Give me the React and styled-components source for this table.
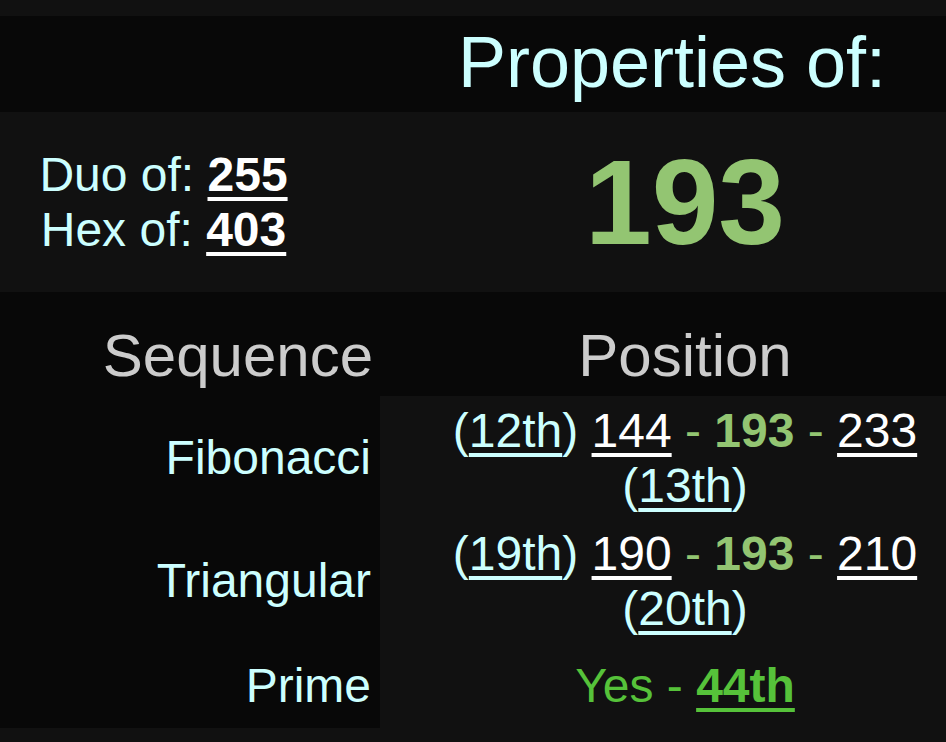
import React from 'react';
import styled, {createGlobalStyle} from 'styled-components';

const GlobalStyle = createGlobalStyle`
  body {
    margin: 0;
    background: #111;
    font-family: "Liberation Sans", Arial, Helvetica, sans-serif;
    color: #ccffff;
  }
`;

const Page = styled.div`
  padding-top: 16px;
  width: 946px;
`;

const IntroTable = styled.div`
  display: grid;
  grid-template-columns: 380px 1fr;
  grid-template-rows: 96px 180px;
`;

const HeadBlank = styled.div`
  background: #080808;
`;

const Title = styled.div`
  background: #080808;
  font-size: 72px;
  text-align: center;
  padding: 5px 0 0 18px;
  white-space: nowrap;
`;

const Aliases = styled.div`
  background: #111;
  display: flex;
  flex-direction: column;
  justify-content: center;
  align-items: center;
  padding-right: 53px;
  font-size: 48px;
`;

const Link = styled.a`
  color: ${props => props.color || '#fff'};
  font-weight: ${props => props.bold ? 700 : 400};
  text-decoration: underline;
  text-underline-offset: 6px;
  cursor: pointer;
`;

const BigNumber = styled.div`
  background: #111;
  display: flex;
  align-items: center;
  justify-content: center;
  padding-left: 44px;
  font-size: 120px;
  font-weight: 700;
  color: #93c572;
`;

const SeqTable = styled.div`
  display: grid;
  grid-template-columns: 380px 1fr;
  grid-template-rows: 104px 123px 123px 86px;
`;

const SeqHead = styled.div`
  background: #080808;
  color: #cccccc;
  font-size: 60px;
  display: flex;
  align-items: flex-end;
  justify-content: ${props => props.right ? 'flex-end' : 'center'};
  padding: ${props => props.right ? '0 7px 6px 0' : '0 0 6px 44px'};
`;

const Label = styled.div`
  background: #080808;
  font-size: 48px;
  display: flex;
  align-items: center;
  justify-content: flex-end;
  padding-right: 9px;
`;

const Value = styled.div`
  background: #111;
  font-size: 48px;
  display: flex;
  align-items: center;
  justify-content: center;
  padding-left: 44px;
  text-align: center;
`;

const Phrase = styled.div`
  color: ${props => props.color || '#ccffff'};
`;

const Dash = styled.span`
  color: #93c572;
`;

const Hit = styled.span`
  color: #93c572;
  font-weight: 700;
`;

function Neighbours({before, beforeRank, after, afterRank}) {
    return (
        <Phrase>
            (<Link color="#ccffff">{beforeRank}</Link>) <Link>{before}</Link>
            <Dash> - </Dash><Hit>193</Hit><Dash> - </Dash>
            <Link>{after}</Link> (<Link color="#ccffff">{afterRank}</Link>)
        </Phrase>
    );
}

export default function App() {
    return (
        <Page>
            <GlobalStyle/>
            <IntroTable>
                <HeadBlank/>
                <Title>Properties of:</Title>
                <Aliases>
                    <div>Duo of: <Link bold>255</Link></div>
                    <div>Hex of: <Link bold>403</Link></div>
                </Aliases>
                <BigNumber>193</BigNumber>
            </IntroTable>
            <SeqTable>
                <SeqHead right>Sequence</SeqHead>
                <SeqHead>Position</SeqHead>

                <Label>Fibonacci</Label>
                <Value>
                    <Neighbours beforeRank="12th" before="144" after="233" afterRank="13th"/>
                </Value>

                <Label>Triangular</Label>
                <Value>
                    <Neighbours beforeRank="19th" before="190" after="210" afterRank="20th"/>
                </Value>

                <Label>Prime</Label>
                <Value>
                    <Phrase color="#56c23a">Yes - <Link bold color="#56c23a">44th</Link></Phrase>
                </Value>
            </SeqTable>
        </Page>
    );
}
